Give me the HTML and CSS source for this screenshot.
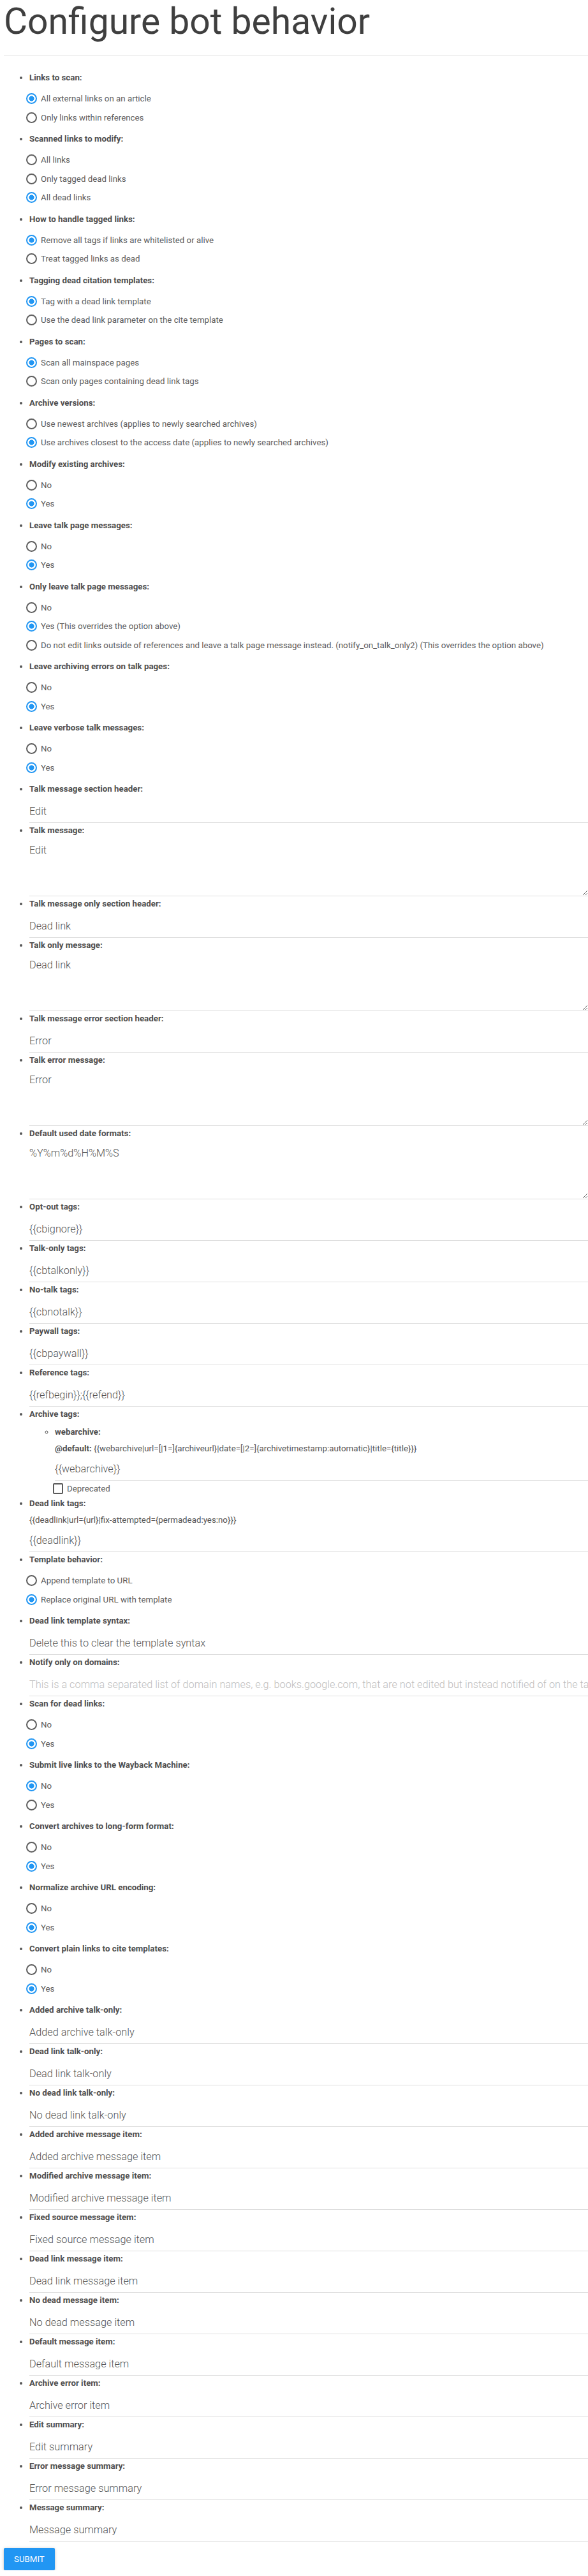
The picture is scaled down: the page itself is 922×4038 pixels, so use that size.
FILE: index.html
```html
<!DOCTYPE html>
<html lang="en">
<head>
<meta charset="utf-8">
<title>Configure bot behavior</title>
<link rel="stylesheet" href="styles.css">
</head>
<body>
<main class="page">
  <h1 class="title">Configure bot behavior</h1>
  <hr class="rule">
  <form class="config">
    <ul class="settings">
      <li>
        <span class="lbl">Links to scan:</span>
        <div class="opts">
          <label class="opt"><input type="radio" name="link_scan" checked><span>All external links on an article</span></label>
          <label class="opt"><input type="radio" name="link_scan"><span>Only links within references</span></label>
        </div>
      </li>
      <li>
        <span class="lbl">Scanned links to modify:</span>
        <div class="opts">
          <label class="opt"><input type="radio" name="dead_only"><span>All links</span></label>
          <label class="opt"><input type="radio" name="dead_only"><span>Only tagged dead links</span></label>
          <label class="opt"><input type="radio" name="dead_only" checked><span>All dead links</span></label>
        </div>
      </li>
      <li>
        <span class="lbl">How to handle tagged links:</span>
        <div class="opts">
          <label class="opt"><input type="radio" name="tag_override" checked><span>Remove all tags if links are whitelisted or alive</span></label>
          <label class="opt"><input type="radio" name="tag_override"><span>Treat tagged links as dead</span></label>
        </div>
      </li>
      <li>
        <span class="lbl">Tagging dead citation templates:</span>
        <div class="opts">
          <label class="opt"><input type="radio" name="tag_cites" checked><span>Tag with a dead link template</span></label>
          <label class="opt"><input type="radio" name="tag_cites"><span>Use the dead link parameter on the cite template</span></label>
        </div>
      </li>
      <li>
        <span class="lbl">Pages to scan:</span>
        <div class="opts">
          <label class="opt"><input type="radio" name="page_scan" checked><span>Scan all mainspace pages</span></label>
          <label class="opt"><input type="radio" name="page_scan"><span>Scan only pages containing dead link tags</span></label>
        </div>
      </li>
      <li>
        <span class="lbl">Archive versions:</span>
        <div class="opts">
          <label class="opt"><input type="radio" name="archive_by_accessdate"><span>Use newest archives (applies to newly searched archives)</span></label>
          <label class="opt"><input type="radio" name="archive_by_accessdate" checked><span>Use archives closest to the access date (applies to newly searched archives)</span></label>
        </div>
      </li>
      <li>
        <span class="lbl">Modify existing archives:</span>
        <div class="opts">
          <label class="opt"><input type="radio" name="touch_archive"><span>No</span></label>
          <label class="opt"><input type="radio" name="touch_archive" checked><span>Yes</span></label>
        </div>
      </li>
      <li>
        <span class="lbl">Leave talk page messages:</span>
        <div class="opts">
          <label class="opt"><input type="radio" name="notify_on_talk"><span>No</span></label>
          <label class="opt"><input type="radio" name="notify_on_talk" checked><span>Yes</span></label>
        </div>
      </li>
      <li>
        <span class="lbl">Only leave talk page messages:</span>
        <div class="opts">
          <label class="opt"><input type="radio" name="notify_on_talk_only"><span>No</span></label>
          <label class="opt"><input type="radio" name="notify_on_talk_only" checked><span>Yes (This overrides the option above)</span></label>
          <label class="opt"><input type="radio" name="notify_on_talk_only"><span>Do not edit links outside of references and leave a talk page message instead. (notify_on_talk_only2) (This overrides the option above)</span></label>
        </div>
      </li>
      <li>
        <span class="lbl">Leave archiving errors on talk pages:</span>
        <div class="opts">
          <label class="opt"><input type="radio" name="notify_error_on_talk"><span>No</span></label>
          <label class="opt"><input type="radio" name="notify_error_on_talk" checked><span>Yes</span></label>
        </div>
      </li>
      <li>
        <span class="lbl">Leave verbose talk messages:</span>
        <div class="opts">
          <label class="opt"><input type="radio" name="verbose_reason"><span>No</span></label>
          <label class="opt"><input type="radio" name="verbose_reason" checked><span>Yes</span></label>
        </div>
      </li>
      <li>
        <span class="lbl">Talk message section header:</span>
        <input class="field" type="text" value="Edit">
      </li>
      <li>
        <span class="lbl">Talk message:</span>
        <textarea class="area">Edit</textarea>
      </li>
      <li>
        <span class="lbl">Talk message only section header:</span>
        <input class="field" type="text" value="Dead link">
      </li>
      <li>
        <span class="lbl">Talk only message:</span>
        <textarea class="area">Dead link</textarea>
      </li>
      <li>
        <span class="lbl">Talk message error section header:</span>
        <input class="field" type="text" value="Error">
      </li>
      <li>
        <span class="lbl">Talk error message:</span>
        <textarea class="area">Error</textarea>
      </li>
      <li>
        <span class="lbl">Default used date formats:</span>
        <textarea class="area">%Y%m%d%H%M%S</textarea>
      </li>
      <li>
        <span class="lbl">Opt-out tags:</span>
        <input class="field" type="text" value="{{cbignore}}">
      </li>
      <li>
        <span class="lbl">Talk-only tags:</span>
        <input class="field" type="text" value="{{cbtalkonly}}">
      </li>
      <li>
        <span class="lbl">No-talk tags:</span>
        <input class="field" type="text" value="{{cbnotalk}}">
      </li>
      <li>
        <span class="lbl">Paywall tags:</span>
        <input class="field" type="text" value="{{cbpaywall}}">
      </li>
      <li>
        <span class="lbl">Reference tags:</span>
        <input class="field" type="text" value="{{refbegin}};{{refend}}">
      </li>
      <li>
        <span class="lbl">Archive tags:</span>
        <ul class="sub">
          <li>
            <span class="lbl">webarchive:</span>
            <p class="note"><b>@default:</b> {{webarchive|url=[|1=]{archiveurl}|date=[|2=]{archivetimestamp:automatic}|title={title}}}</p>
            <input class="field after-note" type="text" value="{{webarchive}}">
            <label class="check"><input type="checkbox"><span>Deprecated</span></label>
          </li>
        </ul>
      </li>
      <li>
        <span class="lbl">Dead link tags:</span>
        <p class="note">{{deadlink|url={url}|fix-attempted={permadead:yes:no}}}</p>
        <input class="field after-note" type="text" value="{{deadlink}}">
      </li>
      <li>
        <span class="lbl">Template behavior:</span>
        <div class="opts">
          <label class="opt"><input type="radio" name="templatebehavior"><span>Append template to URL</span></label>
          <label class="opt"><input type="radio" name="templatebehavior" checked><span>Replace original URL with template</span></label>
        </div>
      </li>
      <li>
        <span class="lbl">Dead link template syntax:</span>
        <input class="field" type="text" value="Delete this to clear the template syntax">
      </li>
      <li>
        <span class="lbl">Notify only on domains:</span>
        <input class="field" type="text" placeholder="This is a comma separated list of domain names, e.g. books.google.com, that are not edited but instead notified of on the talk page.">
      </li>
      <li>
        <span class="lbl">Scan for dead links:</span>
        <div class="opts">
          <label class="opt"><input type="radio" name="scan_dead"><span>No</span></label>
          <label class="opt"><input type="radio" name="scan_dead" checked><span>Yes</span></label>
        </div>
      </li>
      <li>
        <span class="lbl">Submit live links to the Wayback Machine:</span>
        <div class="opts">
          <label class="opt"><input type="radio" name="archive_alive" checked><span>No</span></label>
          <label class="opt"><input type="radio" name="archive_alive"><span>Yes</span></label>
        </div>
      </li>
      <li>
        <span class="lbl">Convert archives to long-form format:</span>
        <div class="opts">
          <label class="opt"><input type="radio" name="convert_archives"><span>No</span></label>
          <label class="opt"><input type="radio" name="convert_archives" checked><span>Yes</span></label>
        </div>
      </li>
      <li>
        <span class="lbl">Normalize archive URL encoding:</span>
        <div class="opts">
          <label class="opt"><input type="radio" name="convert_archives_encoding"><span>No</span></label>
          <label class="opt"><input type="radio" name="convert_archives_encoding" checked><span>Yes</span></label>
        </div>
      </li>
      <li>
        <span class="lbl">Convert plain links to cite templates:</span>
        <div class="opts">
          <label class="opt"><input type="radio" name="convert_to_cites"><span>No</span></label>
          <label class="opt"><input type="radio" name="convert_to_cites" checked><span>Yes</span></label>
        </div>
      </li>
      <li>
        <span class="lbl">Added archive talk-only:</span>
        <input class="field" type="text" value="Added archive talk-only">
      </li>
      <li>
        <span class="lbl">Dead link talk-only:</span>
        <input class="field" type="text" value="Dead link talk-only">
      </li>
      <li>
        <span class="lbl">No dead link talk-only:</span>
        <input class="field" type="text" value="No dead link talk-only">
      </li>
      <li>
        <span class="lbl">Added archive message item:</span>
        <input class="field" type="text" value="Added archive message item">
      </li>
      <li>
        <span class="lbl">Modified archive message item:</span>
        <input class="field" type="text" value="Modified archive message item">
      </li>
      <li>
        <span class="lbl">Fixed source message item:</span>
        <input class="field" type="text" value="Fixed source message item">
      </li>
      <li>
        <span class="lbl">Dead link message item:</span>
        <input class="field" type="text" value="Dead link message item">
      </li>
      <li>
        <span class="lbl">No dead message item:</span>
        <input class="field" type="text" value="No dead message item">
      </li>
      <li>
        <span class="lbl">Default message item:</span>
        <input class="field" type="text" value="Default message item">
      </li>
      <li>
        <span class="lbl">Archive error item:</span>
        <input class="field" type="text" value="Archive error item">
      </li>
      <li>
        <span class="lbl">Edit summary:</span>
        <input class="field" type="text" value="Edit summary">
      </li>
      <li>
        <span class="lbl">Error message summary:</span>
        <input class="field" type="text" value="Error message summary">
      </li>
      <li>
        <span class="lbl">Message summary:</span>
        <input class="field" type="text" value="Message summary">
      </li>
    </ul>
    <button class="submit" type="submit">Submit</button>
  </form>
</main>
</body>
</html>
```

FILE: styles.css
```css
html, body {
  margin: 0;
  padding: 0;
  background: #ffffff;
}

body {
  font-family: Roboto, "Noto Sans", "Liberation Sans", sans-serif;
  color: #555555;
}

.page {
  padding: 0 0 0 6px;
}

.title {
  margin: 0;
  font-size: 57px;
  line-height: 67px;
  font-weight: 400;
  color: #3f3f3f;
}

.rule {
  margin: 19px 0 25px 0;
  border: 0;
  border-top: 1px solid #e3e3e3;
  height: 0;
}

.config {
  margin: 0;
}

.settings {
  margin: 0;
  padding: 0 0 0 40px;
  list-style: disc;
  font-size: 13.3px;
  color: #555555;
}

.settings li {
  margin: 0;
  padding: 0;
}

.lbl {
  display: block;
  height: 20px;
  line-height: 20px;
  font-weight: 700;
  color: #4f4f4f;
  white-space: nowrap;
}

.opts {
  padding: 8px 0 9px 0;
}

.opt {
  display: flex;
  align-items: center;
  gap: 6px;
  height: 29.5px;
  margin-left: -5px;
  color: #5c5c5c;
  font-weight: 400;
  white-space: nowrap;
}

.opt input {
  appearance: none;
  -webkit-appearance: none;
  flex: none;
  box-sizing: border-box;
  width: 17px;
  height: 17px;
  margin: 0;
  border: 2px solid #5e5e5e;
  border-radius: 50%;
  background: #ffffff;
}

.opt input:checked {
  border-color: #2196f3;
  background: radial-gradient(circle, #2196f3 0 3.8px, #ffffff 4.3px);
}

.field {
  display: block;
  box-sizing: content-box;
  width: 100%;
  height: 36px;
  margin: 6px 0 2px 0;
  padding: 0;
  border: 0;
  border-bottom: 1px solid #dedede;
  border-radius: 0;
  background: transparent;
  font-family: Roboto, "Noto Sans", "Liberation Sans", sans-serif;
  font-size: 16.3px;
  font-weight: 300;
  color: #555555;
  outline: none;
}

.field::placeholder {
  color: #bdbdbd;
  opacity: 1;
}

.field.after-note {
  margin-top: 3px;
}

.area {
  display: block;
  box-sizing: border-box;
  width: 100%;
  height: 87px;
  margin: 6px 0 2px 0;
  padding: 3px 0 0 0;
  border: 0;
  border-bottom: 1px solid #dedede;
  border-radius: 0;
  background: transparent;
  font-family: Roboto, "Noto Sans", "Liberation Sans", sans-serif;
  font-size: 16.3px;
  line-height: 24px;
  font-weight: 300;
  color: #555555;
  outline: none;
  resize: vertical;
  overflow: hidden;
}

.note {
  margin: 6px 0 0 0;
  line-height: 20px;
  font-size: 13.3px;
  font-weight: 400;
  color: #555555;
  white-space: nowrap;
}

.note b {
  font-weight: 700;
  color: #4f4f4f;
}

.sub {
  margin: 8px 0 0 0;
  padding: 0 0 0 40px;
  list-style: circle;
}

.check {
  display: flex;
  align-items: center;
  gap: 6px;
  height: 20px;
  margin: 2px 0 4px -3px;
  color: #5c5c5c;
}

.check input {
  appearance: none;
  -webkit-appearance: none;
  flex: none;
  box-sizing: border-box;
  width: 16px;
  height: 17px;
  margin: 0;
  border: 2px solid #5a5a5a;
  border-radius: 2px;
  background: #ffffff;
}

.submit {
  display: block;
  height: 35px;
  margin: 10px 0 0 0;
  padding: 0 16px;
  border: 0;
  border-radius: 2px;
  background: #2196f3;
  color: #ffffff;
  font-family: Roboto, "Noto Sans", "Liberation Sans", sans-serif;
  font-size: 13.3px;
  font-weight: 400;
  text-transform: uppercase;
  letter-spacing: 0;
  box-shadow: 0 2px 2px 0 rgba(0, 0, 0, 0.14), 0 3px 1px -2px rgba(0, 0, 0, 0.12), 0 1px 5px 0 rgba(0, 0, 0, 0.2);
}
```
